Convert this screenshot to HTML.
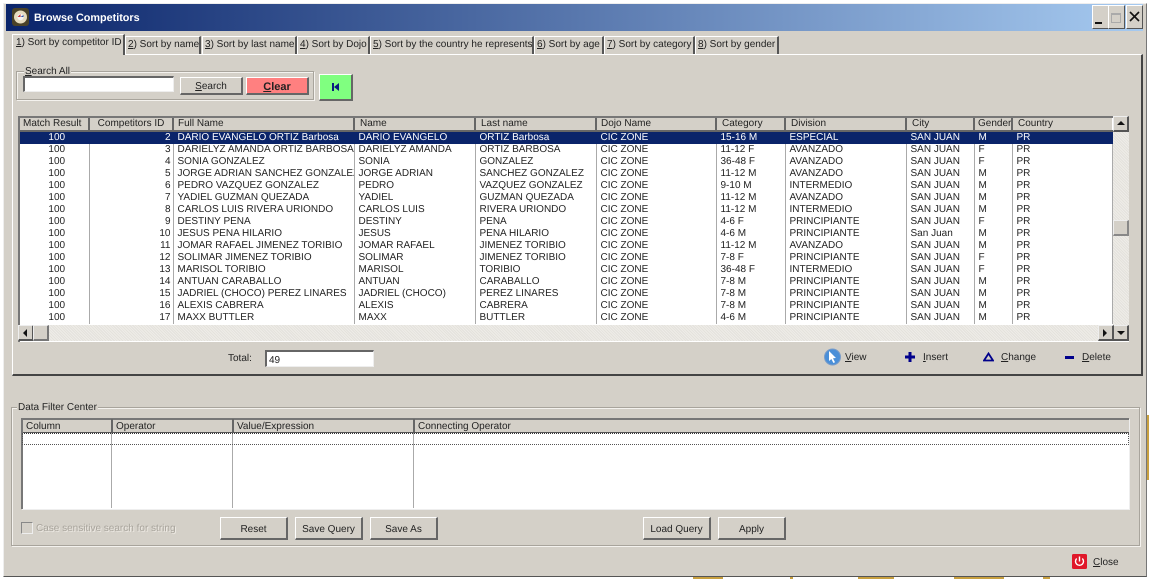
<!DOCTYPE html>
<html><head><meta charset="utf-8"><style>
*{box-sizing:border-box}
html,body{margin:0;padding:0;width:1149px;height:579px;overflow:hidden;background:#fff}
body{font:10px/12px "Liberation Sans",sans-serif;color:#222;position:relative;text-rendering:geometricPrecision}
#w{position:absolute;left:0;top:0;width:1149px;height:579px;filter:blur(.35px)}
.a{position:absolute;white-space:nowrap}
.win{left:3px;top:3px;width:1144px;height:574px;background:#d4d0c8;border-right:1px solid #777;border-bottom:1px solid #555;border-left:1px solid #eee;border-top:1px solid #eee}
.title{left:6px;top:4px;width:1137px;height:27px;background:linear-gradient(90deg,#0a246a,#a6caf0)}
.tt{left:34px;top:12px;color:#fff;font-weight:bold;font-size:10.8px}
.wb{top:5px;height:24px;width:17px;background:#d4d0c8;border:1px solid;border-color:#fff #555 #555 #fff}
.tab{top:36px;height:18px;background:#d4d0c8;border-top:1px solid #fff;border-left:1px solid #fff;border-right:2px solid #555;padding:2px 0 0 2px;z-index:2}
.tab.on{top:34px;height:21px;padding-top:2px;z-index:3}
.panel{left:12px;top:54px;width:1131px;height:322px;border:1px solid;border-color:#fff #444 #444 #fff;border-width:1px 2px 2px 1px}
u{text-decoration:underline}
.gb{border:1px solid #a8a49c;box-shadow:inset 1px 1px 0 #f4f2ee,1px 1px 0 #f4f2ee}
.in{background:#fff;border:1px solid;border-color:#666 #eee #eee #666;border-width:2px 1px 1px 2px}
.btn{background:#d4d0c8;border:1px solid;border-color:#fff #666 #666 #fff;border-width:1px 2px 2px 1px;text-align:center;line-height:23px;color:#222}
.grid{left:18px;top:116px;width:1111px;height:226px;background:#fff;border-top:2px solid #777;border-left:2px solid #777;overflow:hidden}
table{border-collapse:collapse;table-layout:fixed;position:absolute;left:-3px;top:-2px}
td,th{padding:0 0 0 4px;height:12px;line-height:12px;font-size:10px;font-weight:normal;white-space:nowrap;overflow:hidden;border-right:1px solid #aaa;text-align:left}
th{height:14px;background:#d4d0c8;border-right:2px solid #666;border-bottom:2px solid #666;padding-top:2px;line-height:12px}
td.c{text-align:center;padding:0 0 0 8px}
td.r{text-align:right;padding:0 2px 0 0}
tr.s td{background:#0a246a;color:#fff;border-right:1px solid #0a246a}
.sb{background:repeating-linear-gradient(45deg,#eeece8 0 1px,#e4e2dc 1px 2px)}
.sbt{width:16px;height:16px;background:#d4d0c8;border:1px solid;border-color:#eee #555 #555 #eee;border-width:1px 2px 2px 1px}
.vl{width:1px;background:#aaa}
</style></head><body><div id="w">
<div class="a win"></div>
<div class="a title"></div>
<svg class="a" style="left:12px;top:8px" width="17" height="18" viewBox="0 0 17 18"><rect width="17" height="18" rx="3" fill="#4a4228"/><circle cx="8.500" cy="9" r="6.500" fill="#e6dcc0"/><circle cx="8.500" cy="9" r="3.200" fill="#f4f4f4"/><path d="M5.500 9h3V6z" fill="#c33"/><path d="M8.500 9h3v-2z" fill="#35a"/></svg>
<div class="a tt">Browse Competitors</div>
<div class="a wb" style="left:1092px"></div><div class="a" style="left:1095px;top:22px;width:7px;height:2px;background:#111"></div>
<div class="a wb" style="left:1108px;width:17px"></div><div class="a" style="left:1111px;top:13px;width:10px;height:10px;border:1px solid #aaa;border-top:2px solid #aaa"></div>
<div class="a wb" style="left:1126px;width:17px"></div>
<svg class="a" style="left:1129px;top:11px" width="11" height="11"><path d="M1 1 10 10M10 1 1 10" stroke="#111" stroke-width="1.600"/></svg>

<div class="a tab on" style="left:12px;width:113px;padding-left:3px"><u>1</u>) Sort by competitor ID</div>
<div class="a tab" style="left:125px;width:76px"><u>2</u>) Sort by name</div>
<div class="a tab" style="left:202px;width:95px"><u>3</u>) Sort by last name</div>
<div class="a tab" style="left:297px;width:73px"><u>4</u>) Sort by Dojo</div>
<div class="a tab" style="left:370px;width:164px"><u>5</u>) Sort by the country he represents</div>
<div class="a tab" style="left:534px;width:70px"><u>6</u>) Sort by age</div>
<div class="a tab" style="left:604px;width:91px"><u>7</u>) Sort by category</div>
<div class="a tab" style="left:695px;width:84px"><u>8</u>) Sort by gender</div>
<div class="a panel"></div>

<div class="a gb" style="left:16px;top:71px;width:298px;height:29px"></div>
<div class="a" style="left:24px;top:66px;background:#d4d0c8;padding:0 1px"><u>S</u>earch All</div>
<div class="a in" style="left:23px;top:76px;width:151px;height:16px"></div>
<div class="a btn" style="left:180px;top:77px;width:63px;height:18px;line-height:17px"><u>S</u>earch</div>
<div class="a btn" style="left:246px;top:77px;width:63px;height:18px;line-height:19px;background:#ff8080;font-weight:bold;font-size:11px"><u>C</u>lear</div>
<div class="a btn" style="left:319px;top:74px;width:34px;height:27px;background:#80ff80"></div>
<svg class="a" style="left:331px;top:83px" width="10" height="8"><path d="M1 0h2v8H1zM3 4 8 0v8z" fill="#0a1a80"/></svg>

<div class="a grid">
<table style="width:1095px"><colgroup><col style="width:72px"><col style="width:84px"><col style="width:181px"><col style="width:121px"><col style="width:121px"><col style="width:120px"><col style="width:69px"><col style="width:121px"><col style="width:68px"><col style="width:38px"><col style="width:100px"></colgroup>
<tr><th style="padding-left:6px">Match Result</th><th style="text-align:center;padding:2px 0 0">Competitors ID</th><th>Full Name</th><th style="padding-left:5px">Name</th><th style="padding-left:5px">Last name</th><th>Dojo Name</th><th style="padding-left:5px">Category</th><th style="padding-left:5px">Division</th><th style="padding-left:5px">City</th><th style="padding-left:3px">Gender</th><th style="padding-left:5px;border-right:0">Country</th></tr>
<tr class="s"><td class="c">100</td><td class="r">2</td><td>DARIO EVANGELO ORTIZ Barbosa</td><td>DARIO EVANGELO</td><td>ORTIZ Barbosa</td><td>CIC ZONE</td><td>15-16 M</td><td>ESPECIAL</td><td>SAN JUAN</td><td>M</td><td>PR</td></tr>
<tr><td class="c">100</td><td class="r">3</td><td>DARIELYZ AMANDA ORTIZ  BARBOSA</td><td>DARIELYZ AMANDA</td><td>ORTIZ  BARBOSA</td><td>CIC ZONE</td><td>11-12 F</td><td>AVANZADO</td><td>SAN JUAN</td><td>F</td><td>PR</td></tr>
<tr><td class="c">100</td><td class="r">4</td><td>SONIA GONZALEZ</td><td>SONIA</td><td>GONZALEZ</td><td>CIC ZONE</td><td>36-48 F</td><td>AVANZADO</td><td>SAN JUAN</td><td>F</td><td>PR</td></tr>
<tr><td class="c">100</td><td class="r">5</td><td>JORGE ADRIAN SANCHEZ GONZALEZ</td><td>JORGE ADRIAN</td><td>SANCHEZ GONZALEZ</td><td>CIC ZONE</td><td>11-12 M</td><td>AVANZADO</td><td>SAN JUAN</td><td>M</td><td>PR</td></tr>
<tr><td class="c">100</td><td class="r">6</td><td>PEDRO VAZQUEZ GONZALEZ</td><td>PEDRO</td><td>VAZQUEZ GONZALEZ</td><td>CIC ZONE</td><td>9-10 M</td><td>INTERMEDIO</td><td>SAN JUAN</td><td>M</td><td>PR</td></tr>
<tr><td class="c">100</td><td class="r">7</td><td>YADIEL GUZMAN QUEZADA</td><td>YADIEL</td><td>GUZMAN QUEZADA</td><td>CIC ZONE</td><td>11-12 M</td><td>AVANZADO</td><td>SAN JUAN</td><td>M</td><td>PR</td></tr>
<tr><td class="c">100</td><td class="r">8</td><td>CARLOS LUIS RIVERA URIONDO</td><td>CARLOS LUIS</td><td>RIVERA URIONDO</td><td>CIC ZONE</td><td>11-12 M</td><td>INTERMEDIO</td><td>SAN JUAN</td><td>M</td><td>PR</td></tr>
<tr><td class="c">100</td><td class="r">9</td><td>DESTINY PENA</td><td>DESTINY</td><td>PENA</td><td>CIC ZONE</td><td>4-6 F</td><td>PRINCIPIANTE</td><td>SAN JUAN</td><td>F</td><td>PR</td></tr>
<tr><td class="c">100</td><td class="r">10</td><td>JESUS PENA HILARIO</td><td>JESUS</td><td>PENA HILARIO</td><td>CIC ZONE</td><td>4-6 M</td><td>PRINCIPIANTE</td><td>San Juan</td><td>M</td><td>PR</td></tr>
<tr><td class="c">100</td><td class="r">11</td><td>JOMAR RAFAEL JIMENEZ TORIBIO</td><td>JOMAR RAFAEL</td><td>JIMENEZ TORIBIO</td><td>CIC ZONE</td><td>11-12 M</td><td>AVANZADO</td><td>SAN JUAN</td><td>M</td><td>PR</td></tr>
<tr><td class="c">100</td><td class="r">12</td><td>SOLIMAR JIMENEZ TORIBIO</td><td>SOLIMAR</td><td>JIMENEZ TORIBIO</td><td>CIC ZONE</td><td>7-8 F</td><td>PRINCIPIANTE</td><td>SAN JUAN</td><td>F</td><td>PR</td></tr>
<tr><td class="c">100</td><td class="r">13</td><td>MARISOL TORIBIO</td><td>MARISOL</td><td>TORIBIO</td><td>CIC ZONE</td><td>36-48 F</td><td>INTERMEDIO</td><td>SAN JUAN</td><td>F</td><td>PR</td></tr>
<tr><td class="c">100</td><td class="r">14</td><td>ANTUAN CARABALLO</td><td>ANTUAN</td><td>CARABALLO</td><td>CIC ZONE</td><td>7-8 M</td><td>PRINCIPIANTE</td><td>SAN JUAN</td><td>M</td><td>PR</td></tr>
<tr><td class="c">100</td><td class="r">15</td><td>JADRIEL (CHOCO) PEREZ LINARES</td><td>JADRIEL (CHOCO)</td><td>PEREZ LINARES</td><td>CIC ZONE</td><td>7-8 M</td><td>PRINCIPIANTE</td><td>SAN JUAN</td><td>M</td><td>PR</td></tr>
<tr><td class="c">100</td><td class="r">16</td><td>ALEXIS CABRERA</td><td>ALEXIS</td><td>CABRERA</td><td>CIC ZONE</td><td>7-8 M</td><td>PRINCIPIANTE</td><td>SAN JUAN</td><td>M</td><td>PR</td></tr>
<tr><td class="c">100</td><td class="r">17</td><td>MAXX BUTTLER</td><td>MAXX</td><td>BUTTLER</td><td>CIC ZONE</td><td>4-6 M</td><td>PRINCIPIANTE</td><td>SAN JUAN</td><td>M</td><td>PR</td></tr>
</table>
</div>
<div class="a sb" style="left:19px;top:325px;width:1110px;height:16px"></div>
<div class="a sb" style="left:1113px;top:116px;width:16px;height:210px"></div>
<div class="a" style="left:1113px;top:116px;width:16px;height:2px;background:#777"></div>
<div class="a sbt" style="left:1113px;top:116px"></div>
<svg class="a" style="left:1117px;top:121px" width="8" height="5"><path d="M4 0 8 4H0z" fill="#111"/></svg>
<div class="a sbt" style="left:1113px;top:220px;height:16px;border-color:#eee #888 #888 #eee"></div>
<div class="a sbt" style="left:1113px;top:325px"></div>
<svg class="a" style="left:1117px;top:331px" width="8" height="5"><path d="M0 0H8L4 4z" fill="#111"/></svg>
<div class="a sbt" style="left:1098px;top:325px"></div>
<svg class="a" style="left:1103px;top:329px" width="5" height="8"><path d="M0 0 4 4 0 8z" fill="#111"/></svg>
<div class="a sbt" style="left:18px;top:325px"></div>
<svg class="a" style="left:23px;top:329px" width="5" height="8"><path d="M4 0 0 4 4 8z" fill="#111"/></svg>
<div class="a sbt" style="left:33px;top:325px;border-color:#eee #777 #777 #eee"></div>

<div class="a" style="left:228px;top:353px">Total:</div>
<div class="a in" style="left:265px;top:350px;width:109px;height:17px;padding-left:2px;line-height:18px">49</div>

<svg class="a" style="left:824px;top:348px" width="17" height="18" viewBox="0 0 17 18"><circle cx="8.500" cy="9" r="8" fill="#4a8fd8" stroke="#7a9cc8"/><path d="M5 3l7 7-3 .3 2 4-1.600.7-2-4-2.400 2z" fill="#fff"/></svg>
<div class="a" style="left:845px;top:352px"><u>V</u>iew</div>
<svg class="a" style="left:905px;top:352px" width="10" height="10"><path d="M3.500 0h3v3.500H10v3H6.500V10h-3V6.500H0v-3h3.500z" fill="#00008b"/></svg>
<div class="a" style="left:923px;top:352px"><u>I</u>nsert</div>
<svg class="a" style="left:983px;top:352px" width="11" height="10"><path d="M5.500 1.500 10 8.500H1z" fill="none" stroke="#00008b" stroke-width="1.800"/></svg>
<div class="a" style="left:1001px;top:352px"><u>C</u>hange</div>
<div class="a" style="left:1065px;top:356px;width:9px;height:3px;background:#00008b"></div>
<div class="a" style="left:1082px;top:352px"><u>D</u>elete</div>

<div class="a gb" style="left:11px;top:407px;width:1129px;height:139px"></div>
<div class="a" style="left:17px;top:402px;background:#d4d0c8;padding:0 1px">Data Filter Center</div>
<div class="a" style="left:21px;top:418px;width:1108px;height:91px;background:#fff;border-top:2px solid #777;border-left:2px solid #777;box-shadow:1px 1px 0 #eee"></div>
<div class="a" style="left:23px;top:420px;width:1106px;height:12px;background:#d4d0c8;border-bottom:0"></div>
<div class="a" style="left:23px;top:432px;width:1106px;height:1px;background:#555"></div>
<div class="a" style="left:26px;top:421px">Column</div>
<div class="a" style="left:116px;top:421px">Operator</div>
<div class="a" style="left:237px;top:421px">Value/Expression</div>
<div class="a" style="left:418px;top:421px">Connecting Operator</div>
<div class="a" style="left:111px;top:419px;height:13px;width:2px;background:#666"></div>
<div class="a" style="left:232px;top:419px;height:13px;width:2px;background:#666"></div>
<div class="a" style="left:413px;top:419px;height:13px;width:2px;background:#666"></div>
<div class="a vl" style="left:111px;top:433px;height:75px"></div>
<div class="a vl" style="left:232px;top:433px;height:75px"></div>
<div class="a vl" style="left:413px;top:433px;height:75px"></div>
<div class="a" style="left:22px;top:433px;width:1107px;height:12px;border:1px dotted #555;border-top:1px dotted #333"></div>

<div class="a" style="left:21px;top:522px;width:12px;height:12px;border:1px solid;border-color:#888 #eee #eee #888;background:#d4d0c8"></div>
<div class="a" style="left:36px;top:523px;color:#a8a49c;text-shadow:1px 1px 0 #eeeae4">Case sensitive search for string</div>
<div class="a btn" style="left:220px;top:517px;width:68px;height:23px">Reset</div>
<div class="a btn" style="left:295px;top:517px;width:68px;height:23px">Save Query</div>
<div class="a btn" style="left:370px;top:517px;width:68px;height:23px">Save As</div>
<div class="a btn" style="left:643px;top:517px;width:68px;height:23px">Load Query</div>
<div class="a btn" style="left:718px;top:517px;width:68px;height:23px">Apply</div>

<svg class="a" style="left:1072px;top:554px" width="15" height="15" viewBox="0 0 15 15"><rect width="15" height="15" rx="1.500" fill="#e0182a"/><path d="M4.700 4.500a4 4 0 1 0 5.600 0" fill="none" stroke="#fff" stroke-width="1.400"/><path d="M7.500 2.500v5" stroke="#fff" stroke-width="1.400"/></svg>
<div class="a" style="left:1093px;top:557px"><u>C</u>lose</div>

<div class="a" style="left:693px;top:577px;width:30px;height:2px;background:#c8a040"></div>
<div class="a" style="left:790px;top:577px;width:3px;height:2px;background:#c8a040"></div>
<div class="a" style="left:858px;top:577px;width:36px;height:2px;background:#c8a040"></div>
<div class="a" style="left:954px;top:577px;width:50px;height:2px;background:#c8a040"></div>
<div class="a" style="left:1043px;top:577px;width:7px;height:2px;background:#c8a040"></div>
<div class="a" style="left:1147px;top:415px;width:2px;height:65px;background:#c8a040"></div>
</div></body></html>
